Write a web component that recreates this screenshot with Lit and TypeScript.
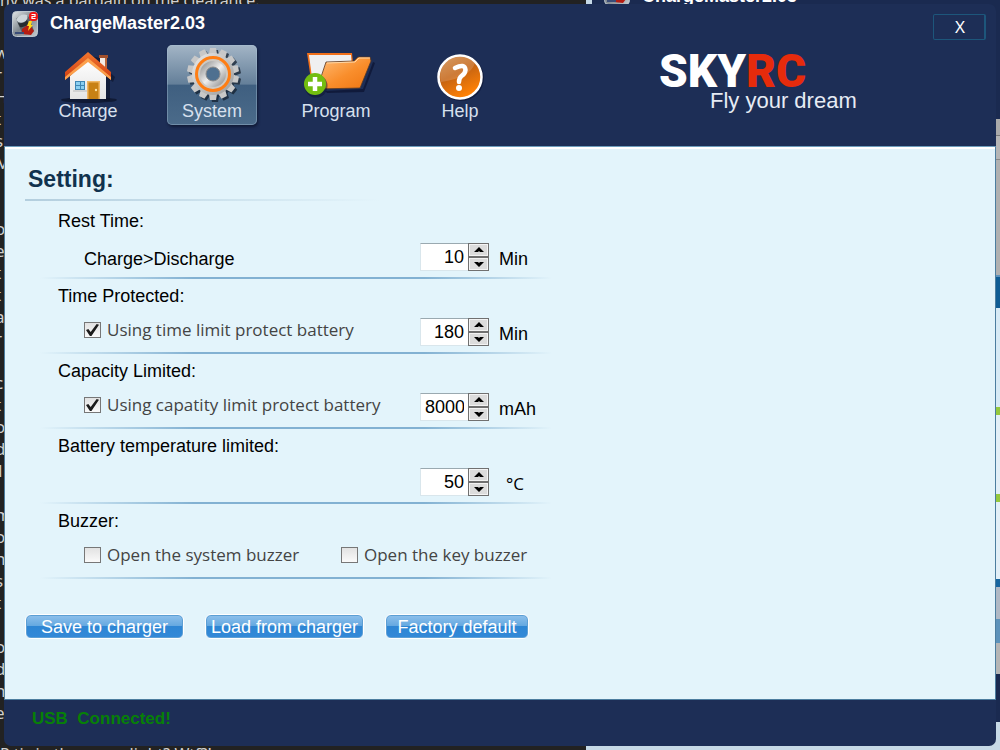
import { LitElement, html, css, svg } from "lit";
import { customElement, property, state } from "lit/decorators.js";

const appIcon = html`<svg class="app-icon" viewBox="0 0 26 26" width="26" height="26" aria-hidden="true">
  <defs>
    <linearGradient id="metal" x1="0" y1="0" x2="1" y2="1">
      <stop offset="0" stop-color="#e3e7ea" /><stop offset="0.5" stop-color="#7e878e" /><stop offset="1" stop-color="#c9ced2" />
    </linearGradient>
  </defs>
  <rect x="0.5" y="0.5" width="25" height="25" rx="4" fill="url(#metal)" stroke="#bcc6d0" />
  <path d="M4 8 Q11 1 17 6 L22 20 Q15 25 10 22 Z" fill="#59626a" />
  <path d="M4 9 Q8 2 15 4 Q17 8 12 11 Q7 13 4 9 Z" fill="#cdd5da" />
  <path d="M6 12 Q12 13 15 9 L17 13 Q12 17 8 16 Z" fill="#252b31" />
  <path d="M10 18 L17 13 L22 20 L19 24 L10 23 Z" fill="#b51d12" />
  <path d="M17 10 l3 0 -1 4 2 0 -5 6 1 -5 -2 0 Z" fill="#ffd91c" />
  <path d="M3 21 h9 v2 h-9 Z" fill="#3b4d78" />
  <rect x="17" y="1" width="9" height="9" rx="4" fill="#f01414" />
  <path d="M19.500 3.500 h3.500 v2 h-3 v2 h3.500" fill="none" stroke="#fff" stroke-width="1.200" />
</svg>`;

const houseIcon = html`<svg viewBox="0 -1 64 56" width="64" height="56" aria-hidden="true">
  <defs>
    <linearGradient id="roof" x1="0" y1="0" x2="0" y2="1"><stop offset="0" stop-color="#f2762e" /><stop offset="1" stop-color="#cf3d12" /></linearGradient>
    <linearGradient id="wall" x1="0" y1="0" x2="0" y2="1"><stop offset="0" stop-color="#ffffff" /><stop offset="1" stop-color="#e4e4e4" /></linearGradient>
  </defs>
  <ellipse cx="33" cy="51" rx="28" ry="3" fill="#0b1228" opacity="0.7" />
  <path d="M35 7 L59 28 L57 33 L54 31 L54 52 L48 52 L48 10 Z" fill="#0b1228" opacity="0.6" />
  <path d="M44 8 h7 v14 l-7 -7 Z" fill="#f3ece6" /><path d="M43 6 h9 v3 h-9 Z" fill="#a2502c" /><path d="M49 9 h2 v13 l-2 -2 Z" fill="#b8683f" />
  <path d="M14 27 L32 10 L50 27 L50 50 L14 50 Z" fill="url(#wall)" />
  <path d="M32 3 L55 23 L55 31 L32 11 L9 31 L9 23 Z" fill="url(#roof)" />
  <path d="M9 28 L32 9 L55 28 L55 31 L32 13 L9 31 Z" fill="#fca04c" />
  <rect x="19" y="32" width="10" height="9" fill="#3f87b4" />
  <path d="M20 33 h4 v3 h-4 Z M25 33 h3 v3 h-3 Z M20 37 h4 v3 h-4 Z M25 37 h3 v3 h-3 Z" fill="#8bcff0" />
  <rect x="17" y="41" width="14" height="2" fill="#d2d2d2" />
  <path d="M31 50 V32 H44 V50 Z" fill="#f0b766" />
  <path d="M32.500 50 V33.500 H42.500 V50 Z" fill="#c88115" /><circle cx="40" cy="41" r="1.200" fill="#ffe4a6" />
</svg>`;

const teeth = Array.from({ length: 14 }, (_, i) => (i * 360) / 14);
const gearIcon = html`<svg viewBox="-1 0 64 56" width="64" height="56" aria-hidden="true">
  <defs>
    <linearGradient id="gear" x1="0" y1="0" x2="1" y2="1"><stop offset="0" stop-color="#ececec" /><stop offset="0.5" stop-color="#c2c2c2" /><stop offset="1" stop-color="#9b9b9b" /></linearGradient>
    <linearGradient id="hub" x1="0" y1="0" x2="1" y2="1"><stop offset="0" stop-color="#9c9c9c" /><stop offset="0.5" stop-color="#eeeeee" /><stop offset="1" stop-color="#9a9a9a" /></linearGradient>
  </defs>
  <g fill="#14202f" opacity="0.75" transform="translate(2 2)">
    <circle cx="32" cy="26" r="21" />
    ${teeth.map((a) => svg`<path d="M28 6 L29 0 H35 L36 6 Z" transform="rotate(${a} 32 26)" />`)}
  </g>
  <g fill="#c8c8c8">
    ${teeth.map((a) => svg`<path d="M28 6 L29 0 H35 L36 6 Z" transform="rotate(${a} 32 26)" />`)}
  </g>
  <circle cx="32" cy="26" r="21" fill="url(#gear)" />
  <circle cx="32" cy="26" r="16.500" fill="#cdc9c4" stroke="#ff7e14" stroke-width="3" />
  <circle cx="32" cy="26" r="10" fill="none" stroke="url(#hub)" stroke-width="6" />
  <circle cx="32" cy="26" r="7" fill="#4f7090" stroke="#8a8a8a" />
</svg>`;

const folderIcon = html`<svg viewBox="-3 -1 72 56" width="72" height="56" aria-hidden="true">
  <defs>
    <linearGradient id="folder" x1="0" y1="0" x2="1" y2="1"><stop offset="0" stop-color="#ffc07c" /><stop offset="0.550" stop-color="#f98e2c" /><stop offset="1" stop-color="#ee7410" /></linearGradient>
  </defs>
  <path d="M22 42 L60 40 L70 13 L72 14 L61 43 L24 44 Z" fill="#0c1330" opacity="0.7" />
  <path d="M4 4 L49 4 L51 24 L20 38 L9 38 Z" fill="#f2701a" />
  <path d="M6 6 L48 6 L49 20 L22 36 L10 36 Z" fill="#f0f0f0" />
  <path d="M23 13 L51 12 L55 8 L67 8 L68 12 L57 39 L14 40 Z" fill="url(#folder)" stroke="#5b3a24" stroke-width="0.800" />
  <path d="M24 14 L52 13 L56 9 L67 9" fill="none" stroke="#ffd7a6" />
  <circle cx="13" cy="37" r="11.500" fill="#0c1330" opacity="0.5" />
  <circle cx="12" cy="35" r="11" fill="#72bd10" />
  <path d="M12 28 V42 M5 35 H19" stroke="#fff" stroke-width="4.500" />
</svg>`;

const helpIcon = html`<svg viewBox="0 -1 64 56" width="64" height="56" aria-hidden="true">
  <defs>
    <linearGradient id="help" x1="0" y1="0" x2="0.500" y2="1"><stop offset="0" stop-color="#cf8a48" /><stop offset="0.500" stop-color="#c46313" /><stop offset="1" stop-color="#ff8105" /></linearGradient>
  </defs>
  <circle cx="33" cy="29" r="23" fill="#0c1330" opacity="0.6" />
  <circle cx="32" cy="28" r="21.500" fill="url(#help)" stroke="#fff" stroke-width="2.500" />
  <path d="M13 33 A20 20 0 0 1 47 14 Q42 29 13 33 Z" fill="#fff" opacity="0.16" />
  <path d="M27 19 Q37 14 37.500 21 Q37 25 33.500 27 Q31 29 31 33" fill="none" stroke="#fff" stroke-width="4.500" stroke-linecap="round" />
  <circle cx="31" cy="39" r="3" fill="#fff" />
</svg>`;

@customElement("spin-box")
class SpinBox extends LitElement {
  @property() name = "";
  @property({ type: Number }) value = 0;

  static styles = css`
    :host { display: block; }
    .box { display: flex; height: 28px; }
    .field {
      box-sizing: border-box; width: 48px; height: 28px; padding: 0 4px; border: 1px solid #d9e6ec;
      border-top-color: #9aa9b0; border-right: 0; border-radius: 0; background: #fff; color: #000;
      font: 18px/26px "Liberation Sans", Arial, sans-serif; text-align: right; outline: none;
    }
    .steps { display: flex; flex-direction: column; width: 21px; }
    .step {
      flex: 1; display: flex; align-items: center; justify-content: center; padding: 0;
      border: 1px solid #707070; border-radius: 0; background: #dcdcdc; box-shadow: inset 0 0 0 1px #f4f4f4;
    }
  `;

  render() {
    return html`<div class="box">
      <input class="field" type="text" inputmode="numeric" aria-label=${this.name} .value=${String(this.value)} />
      <div class="steps">
        <button class="step" aria-label="Increase" @click=${() => this.value++}>
          <svg width="10" height="6" viewBox="0 0 10 6"><path d="M5 0 L10 5 H6 L5 4 L4 5 H0 Z" fill="#000" /></svg>
        </button>
        <button class="step" aria-label="Decrease" @click=${() => this.value--}>
          <svg width="10" height="6" viewBox="0 0 10 6"><path d="M5 6 L10 1 H6 L5 2 L4 1 H0 Z" fill="#000" /></svg>
        </button>
      </div>
    </div>`;
  }
}

interface Group {
  title: string;
  text?: string;
  checks?: { label: string; on: boolean }[];
  value?: number;
  unit?: string;
  symbol?: boolean;
}

@customElement("app-root")
class AppRoot extends LitElement {
  @state() private groups: Group[] = [
    { title: "Rest Time:", text: "Charge>Discharge", value: 10, unit: "Min" },
    { title: "Time Protected:", checks: [{ label: "Using time limit protect battery", on: true }], value: 180, unit: "Min" },
    { title: "Capacity Limited:", checks: [{ label: "Using capatity limit protect battery", on: true }], value: 8000, unit: "mAh" },
    { title: "Battery temperature limited:", value: 50, unit: "°C", symbol: true },
    { title: "Buzzer:", checks: [{ label: "Open the system buzzer", on: false }, { label: "Open the key buzzer", on: false }] },
  ];
  @state() private active = "System";

  private tabs = [
    { name: "Charge", icon: houseIcon },
    { name: "System", icon: gearIcon },
    { name: "Program", icon: folderIcon },
    { name: "Help", icon: helpIcon },
  ];

  static styles = css`
    :host {
      display: flex; position: relative; min-height: 100vh; box-sizing: border-box; padding: 4px;
      overflow: hidden; background: #222; color: #000; font: 18px/22px "Liberation Sans", Arial, sans-serif;
    }
    * { box-sizing: border-box; }

    .desktop { position: absolute; inset: 0; overflow: hidden; }
    .page-line { position: absolute; left: 0; color: #d0d0d0; font: 16px/20px "Noto Sans", sans-serif; white-space: pre; }
    .page-line.first { top: -10px; }
    .page-line.last { bottom: -14px; }
    .margin-text { position: absolute; left: -5px; top: 42px; color: #cfcfcf; font: 17px/22px "Noto Sans", sans-serif; white-space: pre; }
    .other { position: absolute; left: 586px; right: 0; top: 0; bottom: 0; background: #c6d9e6; display: flex; flex-direction: column; }
    .other-head { flex: 0 0 119px; display: flex; gap: 12px; padding-left: 12px; margin-left: 6px; background: #1a2a50; color: #fff; font-weight: bold; overflow: hidden; }
    .other-head svg { margin-top: -21px; }
    .other-head span { margin-top: -15px; }
    .other-body {
      flex: 1;
      background: linear-gradient(#aaa 0 16px, #777 16px 17px, #b5b5b5 17px 40px, #888 40px 41px, #b0b0b0 41px 156px,
        #5f93bb 156px 158px, #0f5c94 158px 189px, #d7eaf5 189px 288px, #94c83d 288px 296px, #e2eff7 296px 375px,
        #94c83d 375px 383px, #e2eff7 383px 460px, #1766a0 460px 468px, #b0b8c4 468px 500px, #5d92ba 500px 524px,
        #b5b5b5 524px 555px, #1a2a50 555px 603px, #c6d9e6 603px);
    }

    .window {
      position: relative; flex: 1; display: flex; flex-direction: column; min-width: 0;
      border-radius: 7px; overflow: hidden; background: #1d2e56;
    }
    .titlebar { display: flex; justify-content: space-between; height: 41px; padding: 7px 10px 0 8px; }
    .brand { display: flex; gap: 12px; color: #fff; font-weight: bold; line-height: 24px; }
    .app-icon { display: block; flex: none; }
    .close {
      width: 53px; height: 26px; margin-top: 3px; padding: 0 0 0 2px; border: 1px solid #1d567b; border-right-width: 2px;
      border-radius: 2px; background: none; color: #fff; font: 17px/22px "Noto Sans", sans-serif;
    }
    .toolbar { display: flex; height: 101px; padding-left: 39px; }
    .tabs { display: flex; gap: 34px; }
    .tab {
      display: flex; flex-direction: column; align-items: center; width: 90px; height: 80px; padding: 3px 0 0; border: 0;
      border-radius: 5px; background: none; color: #d7e0ee; font: 18px/20px "Liberation Sans", Arial, sans-serif;
    }
    .tab svg { display: block; overflow: visible; flex: none; margin-bottom: -3px; }
    .tab.active {
      background: linear-gradient(#a3b5c6, #647f99 49%, #3f5f80 50%, #4b6b8a);
      box-shadow: inset 0 0 0 1px rgba(170, 195, 215, 0.4), 1px 2px 3px #101a36;
    }
    .logo { display: flex; flex-direction: column; margin-left: 154px; color: #fff; }
    .logo-name { margin-top: 6px; font: 900 46px/40px Roboto, sans-serif; }
    .logo-name span { color: #e62b0c; }
    .logo-tag { margin: -3px 0 0 51px; color: #e6ebf4; font-size: 22px; line-height: 26px; }

    .content { flex: 1; border: 1px solid #4c7d9f; border-top: 1px solid #6d9dbd; background: #e3f4fb; padding: 0 20px; box-shadow: inset 0 2px #fff; }
    .heading { width: 355px; max-width: 100%; margin: 0; padding: 18px 0 6px 3px; color: #10324e; font-size: 23px; line-height: 28px; }
    .rule { height: 2px; background: linear-gradient(90deg, #b3cede, transparent); width: 355px; max-width: 100%; }
    .groups { width: 512px; max-width: 100%; margin: 3px 0 35px 15px; }
    .group { padding: 6px 0; }
    .group-rule { height: 2px; background: linear-gradient(90deg, transparent, #82b1d2 30%, #82b1d2 75%, transparent); }
    .group-title { margin: 0 0 11px 18px; font-size: 18px; font-weight: normal; line-height: 22px; }
    .row { display: grid; grid-template-columns: 336px 69px 1fr; height: 28px; padding-left: 44px; }
    .row.pair { grid-template-columns: 257px 1fr; }
    .text, .unit { align-self: end; line-height: 24px; }
    .unit { padding-left: 10px; }
    .unit.symbol { padding-left: 17px; font: 17px/24px "Open Sans", "Noto Sans", sans-serif; }
    .check { display: flex; align-items: center; gap: 6px; height: 24px; color: #444; font: 17px/24px "Open Sans", "Noto Sans", sans-serif; white-space: nowrap; }
    .check input {
      appearance: none; flex: none; width: 17px; height: 16px; margin: 0; border: 1px solid #777;
      background: linear-gradient(#e2e2e2, #fafafa); display: grid; place-items: center;
    }
    .check input:checked::before {
      content: ""; width: 13px; height: 12px; background: #1c1c1c;
      clip-path: polygon(0 50%, 18% 42%, 36% 66%, 82% 0, 100% 6%, 42% 100%, 30% 100%);
    }
    .actions { display: flex; gap: 21px; }
    .action {
      width: 159px; height: 25px; padding: 0; border: 1px solid #fff; border-radius: 6px; color: #fff;
      background: linear-gradient(#8fc1ec, #64a8e0 48%, #2e86d4 50%, #3389d8); box-shadow: inset 0 0 0 1px #5c9fd4;
      font: 18px/22px "Liberation Sans", Arial, sans-serif; white-space: nowrap;
    }
    .action.short { width: 144px; }
    .status { height: 46px; padding: 8px 28px; color: #078007; font-size: 17px; font-weight: bold; line-height: 22px; white-space: pre; }
  `;

  private renderCheck(c: { label: string; on: boolean }) {
    return html`<label class="check"><input type="checkbox" .checked=${c.on} />${c.label}</label>`;
  }

  private renderGroup(g: Group) {
    const row =
      g.value === undefined
        ? html`<div class="row pair">${g.checks?.map((c) => this.renderCheck(c))}</div>`
        : html`<div class="row">
            ${g.checks ? this.renderCheck(g.checks[0]) : html`<span class="text">${g.text ?? ""}</span>`}
            <spin-box .name=${g.title} .value=${g.value}></spin-box>
            <span class="unit ${g.symbol ? "symbol" : ""}">${g.unit}</span>
          </div>`;
    return html`<section class="group"><h2 class="group-title">${g.title}</h2>${row}</section><div class="group-rule"></div>`;
  }

  render() {
    return html`
      <div class="desktop" aria-hidden="true">
        <div class="page-line first">ny was a bargain on the clearance.</div>
        <div class="margin-text">${"w\nr\nH\nt\ns\nM\nl\n\no\ne\nt\nt\na\nr\n\nc\nt\no\nd\n1\n\nm\no\nn\ns\nt\n\no\nd\nn\ne"}</div>
        <div class="page-line last">P tis in the game light? Wtf?!</div>
        <div class="other">
          <div class="other-head">${appIcon}<span>ChargeMaster2.03</span></div>
          <div class="other-body"></div>
        </div>
      </div>
      <main class="window">
        <header>
          <div class="titlebar">
            <div class="brand">${appIcon}<span>ChargeMaster2.03</span></div>
            <button class="close" aria-label="Close">X</button>
          </div>
          <div class="toolbar">
            <nav class="tabs">
              ${this.tabs.map(
                (t) => html`<button class="tab ${t.name === this.active ? "active" : ""}" @click=${() => (this.active = t.name)}>
                  ${t.icon}<span>${t.name}</span>
                </button>`
              )}
            </nav>
            <div class="logo">
              <div class="logo-name">SKY<span>RC</span></div>
              <div class="logo-tag">Fly your dream</div>
            </div>
          </div>
        </header>
        <div class="content">
          <h1 class="heading">Setting:</h1>
          <div class="rule"></div>
          <div class="groups">${this.groups.map((g) => this.renderGroup(g))}</div>
          <div class="actions">
            <button class="action">Save to charger</button>
            <button class="action">Load from charger</button>
            <button class="action short">Factory default</button>
          </div>
        </div>
        <footer class="status">USB  Connected!</footer>
      </main>
    `;
  }
}
